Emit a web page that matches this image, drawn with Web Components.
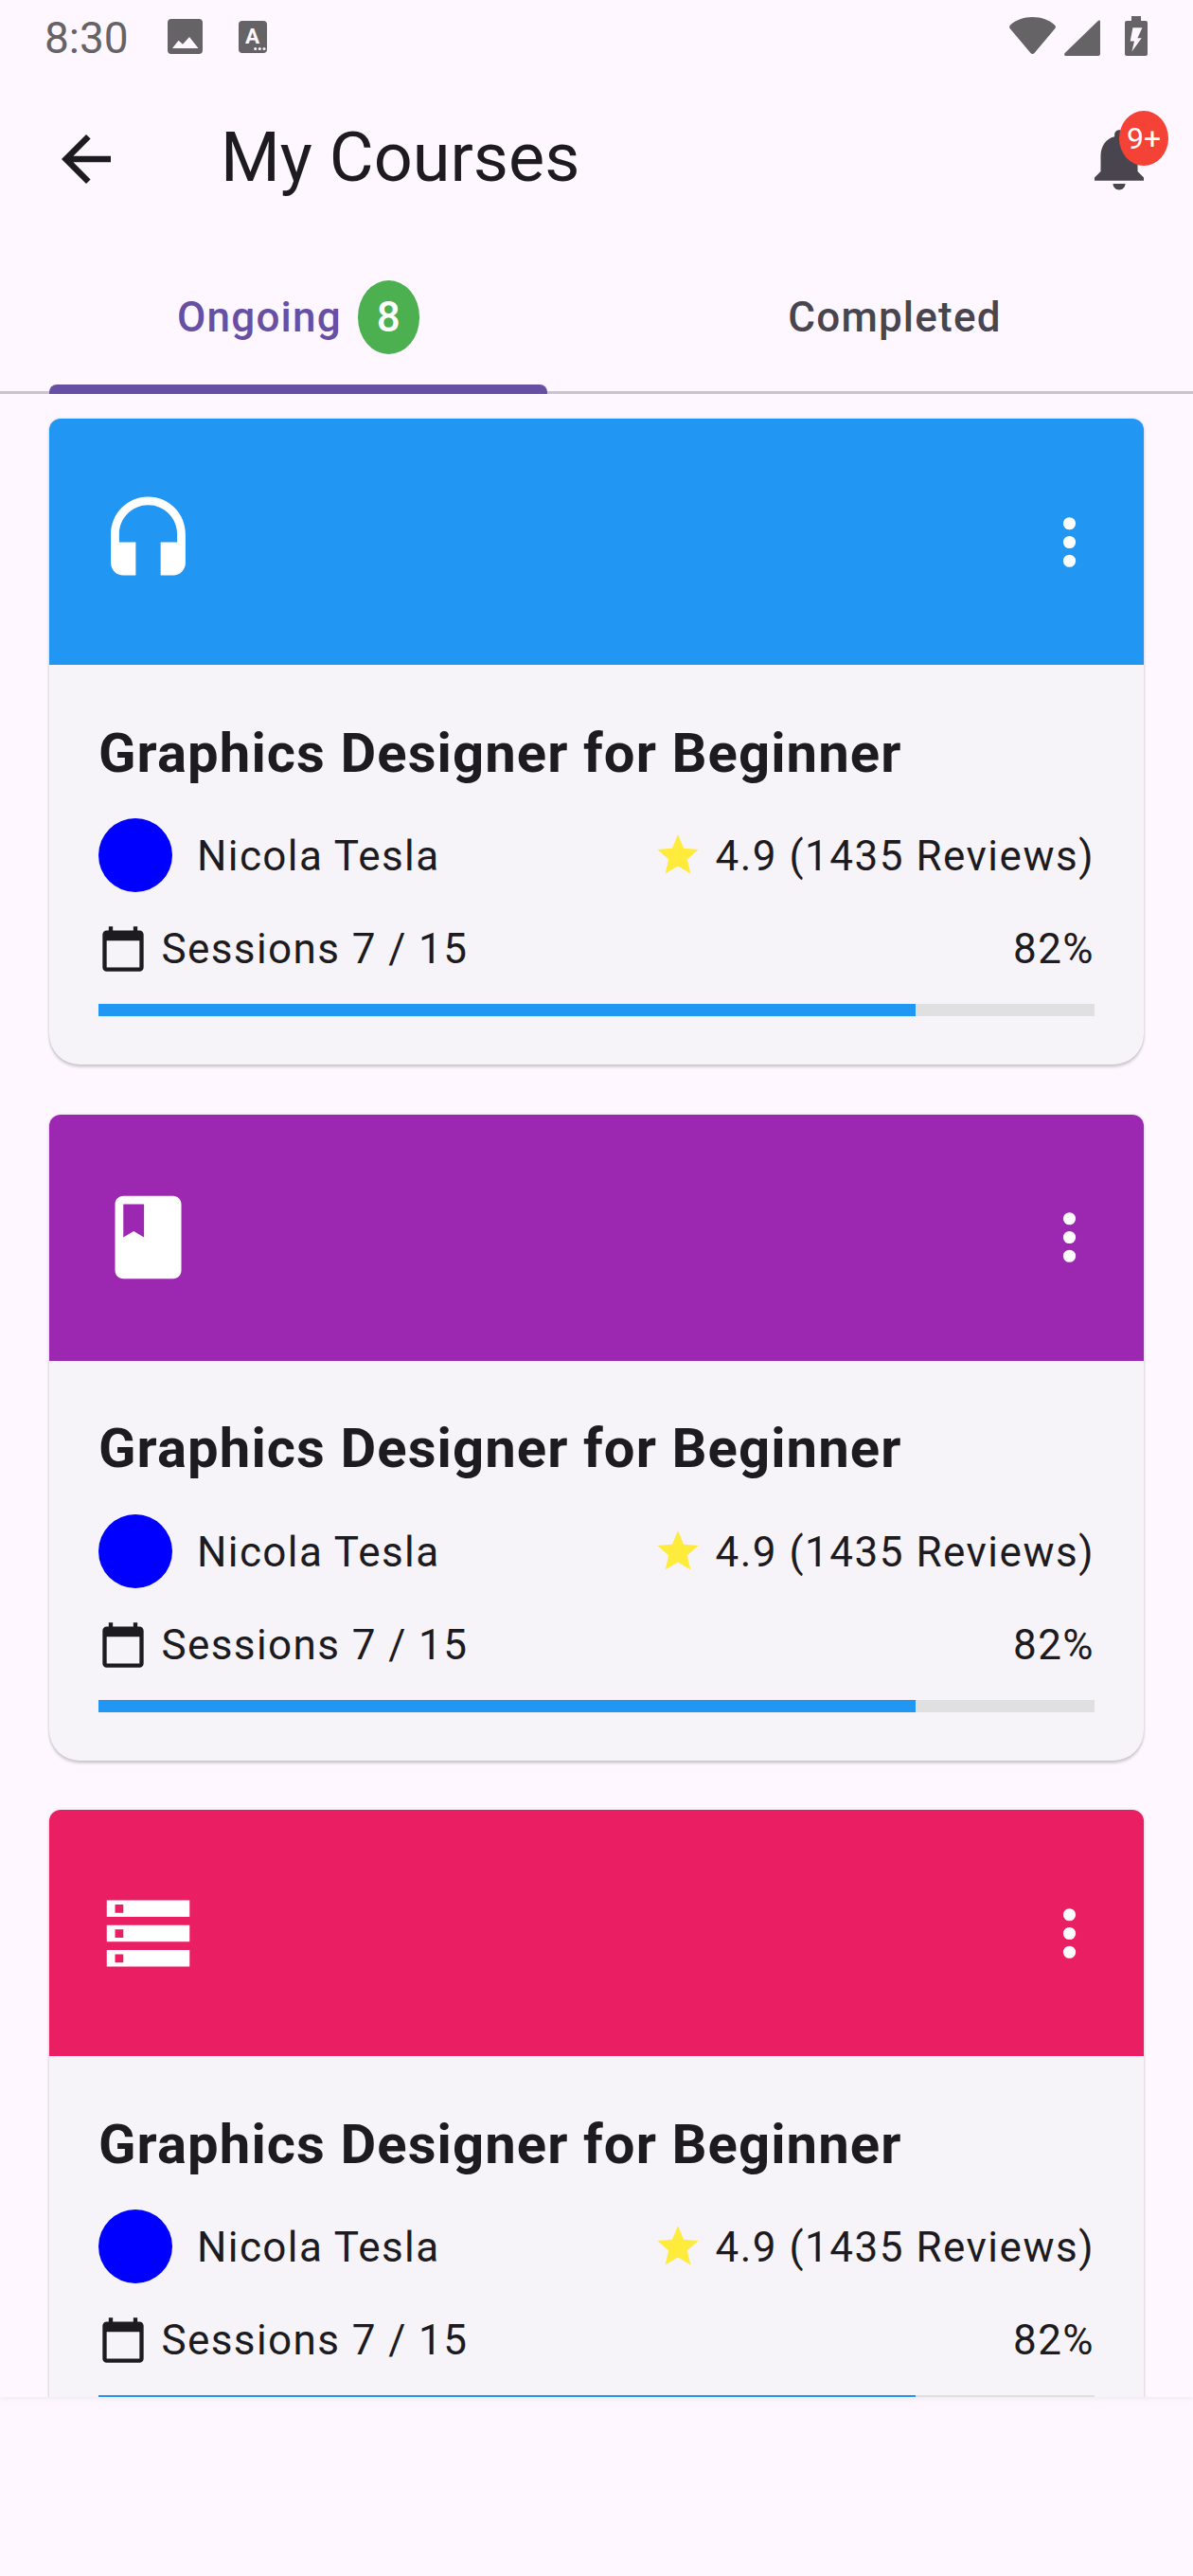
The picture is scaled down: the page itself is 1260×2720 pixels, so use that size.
<!DOCTYPE html>
<html>
<head>
<meta charset="utf-8">
<title>My Courses</title>
<style>
  html, body { margin: 0; height: 2720px; overflow: hidden; background: #FEF7FF; }
  body { font-family: Roboto, "Liberation Sans", sans-serif; color: #1D1B20; display: flex; flex-direction: column; }
</style>
</head>
<body>
<status-bar></status-bar>
<app-bar heading="My Courses" count="9+"></app-bar>
<course-tabs count="8"></course-tabs>
<course-list>
  <course-card color="#2196F3" icon="headset"></course-card>
  <course-card color="#9C27B0" icon="book"></course-card>
  <course-card color="#E91E63" icon="storage"></course-card>
</course-list>
<script>
const ICONS = {
  headset: "M12 1c-4.97 0-9 4.03-9 9v7c0 1.66 1.34 3 3 3h3v-8H5v-2c0-3.87 3.13-7 7-7s7 3.13 7 7v2h-4v8h3c1.66 0 3-1.34 3-3v-7c0-4.97-4.03-9-9-9z",
  book: "M18 2H6c-1.1 0-2 .9-2 2v16c0 1.1.9 2 2 2h12c1.1 0 2-.9 2-2V4c0-1.1-.9-2-2-2zM6 4h5v8l-2.5-1.5L6 12V4z",
  storage: "M2 20h20v-4H2v4zm2-3h2v2H4v-2zM2 4v4h20V4H2zm4 3H4V5h2v2zm-4 7h20v-4H2v4zm2-3h2v2H4v-2z"
};

class StatusBar extends HTMLElement {
  constructor() {
    super();
    const shadow = this.attachShadow({ mode: "open" });
    shadow.innerHTML = `
    <style>
      :host { display: flex; align-items: center; height: 79px; padding: 0 48px 0 47px; color: #666366; font-size: 46px; }
      .left { display: flex; align-items: center; flex: 1; }
      .time { width: 130px; line-height: 79px; padding-top: 2px; }
      svg { display: block; fill: #666366; }
      .right { display: flex; align-self: flex-start; }
    </style>
    <div class="left">
      <span class="time">8:30</span>
      <svg width="37" height="37" viewBox="0 0 37 37" style="margin:-2px 38px 0 0"><path fill-rule="evenodd" d="M4 0h29a4 4 0 0 1 4 4v29a4 4 0 0 1-4 4H4a4 4 0 0 1-4-4V4a4 4 0 0 1 4-4zM5 31h27.500L23 19l-7 7.700-4.400-4z"/></svg>
      <svg width="30" height="34" viewBox="0 0 30 34" style="margin-top:-1px"><rect width="30" height="34" rx="4"/><text x="14.500" y="24.400" text-anchor="middle" font-family="Roboto" font-weight="700" font-size="22.500" fill="#FEF7FF">A</text><circle cx="17.700" cy="29.400" r="1.500" fill="#FEF7FF"/><circle cx="22.300" cy="29.400" r="1.500" fill="#FEF7FF"/><circle cx="27" cy="29.400" r="1.500" fill="#FEF7FF"/></svg>
    </div>
    <div class="right">
      <svg width="49" height="39" viewBox="0 0 49 39" style="margin:18px 9px 0 0"><path d="M1 8.500C7 3 15 0 24.500 0S42 3 48 8.500c1 1 1.200 2.300.4 3.500L26.500 38c-1 1.300-3 1.300-4 0L.6 12C-.2 10.800 0 9.500 1 8.500z"/></svg>
      <svg width="38" height="38" viewBox="0 0 38 38" style="margin:21px 26px 0 0"><path d="M36 .8c1-.8 2-.4 2 1V36c0 1.100-.9 2-2 2H2c-1.800 0-2.500-1.700-1.300-3z"/></svg>
      <svg width="24" height="42" viewBox="0 0 24 42" style="margin-top:17px"><path fill-rule="evenodd" d="M7 0h10v5h5a2 2 0 0 1 2 2v33a2 2 0 0 1-2 2H2a2 2 0 0 1-2-2V7a2 2 0 0 1 2-2h5zM8.400 12.300h10l-5 11h4.300L7.400 37.600 10 26.600H5.700z"/></svg>
    </div>`;
  }
}
customElements.define("status-bar", StatusBar);

class AppBar extends HTMLElement {
  constructor() {
    super();
    const shadow = this.attachShadow({ mode: "open" });
    shadow.innerHTML = `
    <style>
      :host { display: flex; align-items: center; height: 177px; padding-left: 52px; padding-right: 26px; box-sizing: border-box; }
      svg { display: block; }
      .title { flex: 1; margin: 0 0 2px 103px; font-size: 72px; line-height: 1; color: #1D1B20; }
      .bell { position: relative; width: 78px; height: 78px; margin-right: 13px; }
      .count { position: absolute; left: 39px; top: -12px; width: 52px; height: 58px; border-radius: 26px / 29px;
        background: #F44336; color: #fff; font-size: 32px; display: flex; align-items: center; justify-content: center; }
    </style>
    <svg width="78" height="78" viewBox="0 0 24 24" fill="#1D1B20"><path d="M20 11H7.830l5.590-5.590L12 4l-8 8 8 8 1.410-1.410L7.830 13H20v-2z"/></svg>
    <div class="title">${this.getAttribute("heading")}</div>
    <div class="bell">
      <svg width="78" height="78" viewBox="0 0 24 24" fill="#49454F"><path d="M12 22c1.100 0 2-.9 2-2h-4c0 1.100.89 2 2 2zm6-6v-5c0-3.070-1.640-5.640-4.500-6.320V4c0-.83-.67-1.500-1.500-1.500s-1.500.67-1.500 1.500v.68C7.630 5.360 6 7.920 6 11v5l-2 2v1h16v-1l-2-2z"/></svg>
      <span class="count">${this.getAttribute("count")}</span>
    </div>`;
  }
}
customElements.define("app-bar", AppBar);

class CourseTabs extends HTMLElement {
  constructor() {
    super();
    const shadow = this.attachShadow({ mode: "open" });
    shadow.innerHTML = `
    <style>
      :host { display: grid; grid-template-columns: 1fr 1fr; height: 160px; box-sizing: border-box; border-bottom: 3px solid #CAC4D0; position: relative; font-size: 44px; font-weight: 500; color: #49454F; letter-spacing: 1.200px; }
      .tab { display: flex; align-items: center; justify-content: center; gap: 17px; height: 157px; }
      .on { color: #6750A4; }
      .num { width: 65px; height: 78px; border-radius: 33px / 39px; background: #4CAF50; color: #fff; display: flex; align-items: center; justify-content: center; letter-spacing: 0; }
      .line { position: absolute; left: 52px; width: 526px; bottom: -3px; height: 10px; background: #6750A4; border-radius: 8px 8px 0 0; }
    </style>
    <div class="tab on">Ongoing <span class="num">${this.getAttribute("count")}</span></div>
    <div class="tab">Completed</div>
    <div class="line"></div>`;
  }
}
customElements.define("course-tabs", CourseTabs);

const courseListTemplate = document.createElement("template");
courseListTemplate.innerHTML = `
<style>
  :host { display: flex; flex-direction: column; gap: 52.500px; height: 2115px; box-sizing: border-box; padding: 26px 52px 0; overflow: hidden; box-shadow: 0 2px 6px rgba(0,0,0,.06); }
</style>
<slot></slot>`;
class CourseList extends HTMLElement {
  constructor() {
    super();
    this.attachShadow({ mode: "open" }).append(courseListTemplate.content.cloneNode(true));
  }
}
customElements.define("course-list", CourseList);

class CourseCard extends HTMLElement {
  constructor() {
    super();
    const shadow = this.attachShadow({ mode: "open" });
    shadow.innerHTML = `
    <style>
      :host { display: block; flex: none; height: 682px; background: #F6F3F9; border-radius: 12px 12px 32px 32px; box-shadow: 0 3px 3px rgba(0,0,0,.16), 0 0 3px rgba(0,0,0,.14); }
      .head { height: 260px; background: ${this.getAttribute("color")}; border-radius: 12px 12px 0 0; display: flex; align-items: center; justify-content: space-between; padding: 0 39.500px 0 52px; }
      svg { display: block; }
      .body { padding: 0 52px; font-size: 44px; letter-spacing: 1.400px; color: #1D1B20; }
      h3 { margin: 0; padding-top: 58.500px; font-size: 58px; line-height: 68px; font-weight: 700; letter-spacing: 1.080px; }
      .row { display: flex; align-items: center; justify-content: space-between; }
      .who { margin-top: 35.500px; height: 78px; }
      .who span.txt { padding-top: 2px; }
      .who .rate { letter-spacing: 1.500px; }
      .side { display: flex; align-items: center; }
      .dot { width: 78px; height: 78px; border-radius: 50%; background: #00f; margin-right: 26px; }
      .when { margin-top: 20px; height: 80px; }
      .bar { margin-top: 18px; height: 13px; background: #E0E0E0; }
      .fill { width: 82%; height: 100%; background: #2196F3; }
    </style>
    <div class="head">
      <svg width="105" height="105" viewBox="0 0 24 24" fill="#fff"><path d="${ICONS[this.getAttribute("icon")]}"/></svg>
      <svg width="79" height="79" viewBox="0 0 24 24" fill="#fff"><circle cx="12" cy="6" r="2"/><circle cx="12" cy="12" r="2"/><circle cx="12" cy="18" r="2"/></svg>
    </div>
    <div class="body">
      <h3>Graphics Designer for Beginner</h3>
      <div class="row who">
        <div class="side"><span class="dot"></span><span class="txt">Nicola Tesla</span></div>
        <div class="side">
          <svg width="52" height="52" viewBox="0 0 24 24" fill="#FFEB3B" style="margin-right:14px"><path d="M12 17.270L18.180 21l-1.640-7.030L22 9.240l-7.190-.61L12 2 9.190 8.630 2 9.240l5.460 4.730L5.820 21z"/></svg>
          <span class="txt rate">4.9 (1435 Reviews)</span>
        </div>
      </div>
      <div class="row when">
        <div class="side">
          <svg width="52" height="52" viewBox="0 0 24 24" fill="#1D1B20" style="margin-right:14.500px"><path d="M20 3h-1V1h-2v2H7V1H5v2H4c-1.100 0-2 .9-2 2v16c0 1.100.9 2 2 2h16c1.100 0 2-.9 2-2V5c0-1.100-.9-2-2-2zm0 18H4V8h16v13z"/></svg>
          Sessions 7 / 15
        </div>
        <div>82%</div>
      </div>
      <div class="bar"><div class="fill"></div></div>
    </div>`;
  }
}
customElements.define("course-card", CourseCard);
</script>
</body>
</html>
